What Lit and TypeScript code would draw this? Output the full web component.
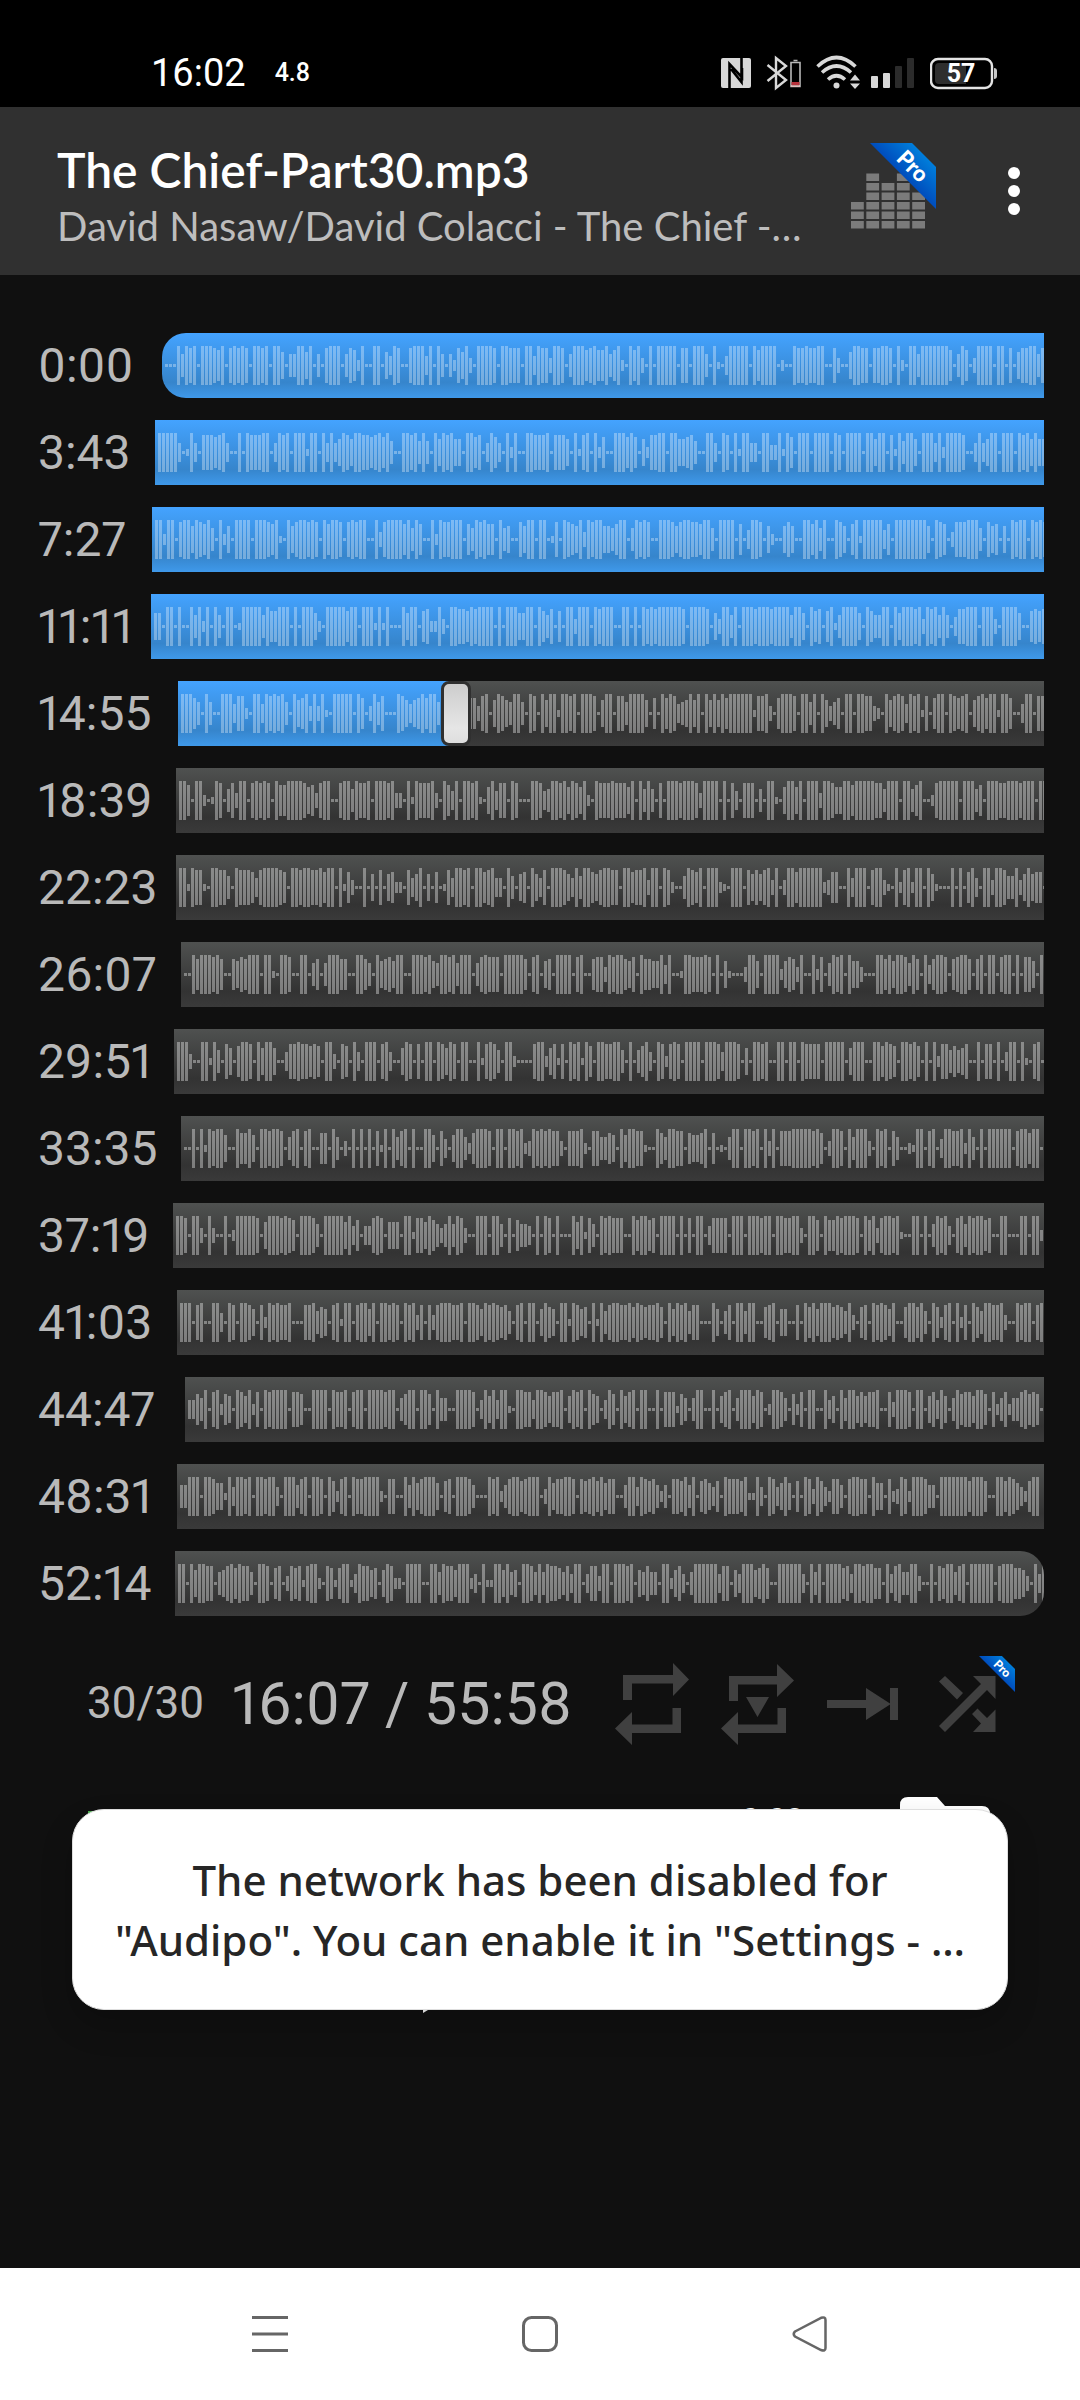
import { LitElement, html, css, svg } from "lit";
import { customElement, property } from "lit/decorators.js";

interface Segment {
  time: string;
  label: number;
  levels: string;
}

/* One digit per sample: 0 is silence, 9 is full level. */
const SEGMENTS: Segment[] = [
  { time: "0:00", label: 124, levels: "0009598909998790898980998909960559969050899905872900990649800899949095052869309999809988809949" + "8839980599978977957920979309099999088099950910499999097999902009889889900830069988088998092099599999997059703999909908068899589989949" },
  { time: "3:43", label: 117, levels: "999994019408887894009098889904989099919909494698699887897950099895950969896609978049740929009988" + "890888609189092700999797062889909966785009940980919944099339197099909999098099990996990819599609994929999800494699099909896966" },
  { time: "7:27", label: 114, levels: "9929908996987950926099990999879109689989809799808989900938999979597009298899907598977095600869909" + "901809876939899665799059898009998689988799509999070499806200686009979590098607919999947099999999609870388899950867060989909898" },
  { time: "11:11", label: 113, levels: "6609909009592909509901999995977999090999620999997990999191900096990782293099887989999090999669909" + "758070993999098999009909098989999998099998063995909998999899995996097807915999960975599096999893989595048899909993099996007878" },
  { time: "14:55", label: 140, levels: "999750950099948820994989895096793939109999909703958000986467979959999999773890698659950980" + "9699199890999806990885999960709798456969096969799999918893079998099590963570990998832096898498918079909878906897991997004990889" },
  { time: "18:39", label: 138, levels: "9970992019805839908989809779999867389900899598890999893309198889309749099891069488098000998" + "4599896986920988898886909595080999899983999909084088805099106996909993998669979999988599909957900289999909995709998899989990999" },
  { time: "22:23", label: 138, levels: "9919881099885098887489999870998998897990917300906080672208469060701849989099789440950670964" + "80999864959976899880997889399098200598790999210999086868939039979999992377009499908993109289299096100090907940993998559369677099" },
  { time: "26:07", label: 143, levels: "00979998970076879990991099800990570599977009975096786990099989659989599905898880999997089" + "0670999908900788398997680977669490019988898090610003996099992687390092805989096630009979699859709479980789970790990899090886090" },
  { time: "29:51", label: 136, levels: "999300991950860799809699600488988787099308709409990894006980809909869809900918985099200008" + "9926818098919709988995090579409828980999909998499980609989009909909888809999906999009979870998970909288575680090880904990910890" },
  { time: "33:35", label: 143, levels: "00909198996009779609989980589089007709503090909081909589090099608406995279998099099892" + "3989898830888920885576096998810097599880766790701059909989093908889999989703998095999309890850021990890499889295090999999089979909" },
  { time: "37:19", label: 135, levels: "9980993093009029999980699989870999850999996947044898066609918869753595983009990995080755409" + "098090009691850989888009799780999909080990488880999099989909988993099709779899980979389989100990905989408959899780099000990992" },
  { time: "41:03", label: 139, levels: "999089009940980998608298988900088957608919908996909989809893808389998890998698987850890990" + "697609919867091958998897987889709698958800096058099599007890660080979699978759307809898690079979509728909280975998893009899089" },
  { time: "44:47", label: 147, levels: "4475908927609869280989999088700999909889089909999899057990997095500999980496949910998849" + "986889069890976049709689099009088817505990090689059996980299850728099009460959968688900839998099068496059788699708258255897870095" },
  { time: "48:31", label: 139, levels: "55999099866194998909989940999589099809728909889999208800959689996078099985000989258997899" + "903968899808789796880059949878525088795907864709888791194098469607098397428850899880966082398299985509999999799970099798642799" },
  { time: "52:14", label: 137, levels: "99096998805689798850998078038781899208717991498867069822099990099598869992409119969560998595" + "98875849904883990999890658550992684059999994880649996797009999994095909999784998997709489559930090879958909999990899977630949999" },
];

const CURRENT = 4;
const ELAPSED = 72;
const SEGMENT_SECONDS = 224;

@customElement("wave-track")
class WaveTrack extends LitElement {
  @property() levels = "";
  static styles = css`
    :host {
      display: block;
      height: 65px;
      overflow: hidden;
      background: linear-gradient(#4f5150, #333 76%, #3a3a3a);
      --bar: rgba(255, 255, 255, 0.37);
    }
    :host([tone="played"]) {
      background: linear-gradient(#44a3ff, #3685cc 76%, #3f99ea);
      --bar: rgba(255, 255, 255, 0.32);
    }
    .wave {
      display: block;
      fill: var(--bar);
    }
  `;
  render() {
    const d = [...this.levels]
      .map((c, i) => {
        const h = c === "0" ? 3 : 3 + Number(c) * 4;
        return `M${3 + i * 4} ${32 - (h - 1) / 2}h3v${h}h-3z`;
      })
      .join("");
    return html`<svg class="wave" width="100%" height="65" aria-hidden="true">
      ${svg`<path d=${d} />`}
    </svg>`;
  }
}

@customElement("pro-ribbon")
class ProRibbon extends LitElement {
  static styles = css`
    :host {
      display: block;
    }
    svg {
      display: block;
      width: 100%;
      height: 100%;
    }
    .word {
      font: 900 22px Lato, "Open Sans", sans-serif;
      fill: #fff;
    }
  `;
  render() {
    return html`<svg viewBox="0 0 66 66" aria-hidden="true">
      <defs>
        <linearGradient id="blue" x1="24" y1="42" x2="55" y2="11" gradientUnits="userSpaceOnUse">
          <stop offset="0" stop-color="#0038b0" />
          <stop offset="1" stop-color="#0080dc" />
        </linearGradient>
      </defs>
      <path d="M0 0H42L66 24V66Z" fill="url(#blue)" />
      <text class="word" transform="translate(43 23) rotate(45)" text-anchor="middle" y="8">Pro</text>
    </svg>`;
  }
}

@customElement("app-root")
class AppRoot extends LitElement {
  static styles = css`
    :host {
      display: block;
      font-family: Lato, "Open Sans", sans-serif;
      color: #b9b9b9;
    }
    * {
      box-sizing: border-box;
    }
    .screen {
      display: flex;
      flex-direction: column;
      min-height: 100vh;
      background: #101010;
    }
    svg {
      display: block;
    }
    button {
      border: 0;
      padding: 0;
      background: none;
      color: inherit;
      font: inherit;
    }
    .status {
      display: flex;
      align-items: center;
      height: 107px;
      padding: 38px 83px 0 151px;
      background: #000;
      color: #fff;
      font-family: Roboto, sans-serif;
    }
    .clock {
      font-size: 38px;
      line-height: 40px;
    }
    .rate {
      flex: 1;
      padding-left: 29px;
      font-size: 25px;
      font-weight: 500;
      line-height: 40px;
    }
    .icons {
      display: flex;
      gap: 15px;
    }
    .charge {
      font: 700 25px Roboto, sans-serif;
      fill: #fff;
    }
    .header {
      display: flex;
      align-items: center;
      height: 168px;
      padding: 0 51px 0 57px;
      background: #303030;
    }
    .titles {
      flex: 1;
      min-width: 0;
      padding-top: 10px;
    }
    .title {
      margin: 0;
      color: #fff;
      font-size: 48px;
      font-weight: 600;
      line-height: 60px;
      white-space: nowrap;
    }
    .artist {
      margin: 0;
      color: #bdbdbd;
      font-size: 40px;
      line-height: 52px;
      white-space: nowrap;
    }
    .equalizer {
      position: relative;
      margin-right: 63px;
    }
    .equalizer pro-ribbon {
      position: absolute;
      top: 36px;
      right: 0;
      width: 66px;
      height: 66px;
    }
    .main {
      position: relative;
      flex: 1;
      padding-top: 58px;
    }
    .rows {
      display: grid;
      grid-template-columns: minmax(0, 1fr);
      gap: 22px;
      margin: 0;
      padding: 0 36px 0 38px;
      list-style: none;
    }
    .row {
      display: flex;
      align-items: center;
      height: 65px;
    }
    .time {
      flex: none;
      font: 400 48px/65px Roboto, sans-serif;
      font-variant-numeric: proportional-nums;
    }
    .track {
      position: relative;
      flex: 1;
      min-width: 0;
    }
    .row:first-child wave-track {
      border-radius: 24px 0 0 24px;
    }
    .row:last-child wave-track {
      border-radius: 0 24px 24px 0;
    }
    .played {
      position: absolute;
      inset: 0 auto 0 0;
      overflow: hidden;
    }
    .seek {
      position: absolute;
      inset: 0 -15px;
      width: calc(100% + 30px);
      height: 65px;
      margin: 0;
      appearance: none;
      background: none;
    }
    .seek::-webkit-slider-thumb {
      appearance: none;
      width: 30px;
      height: 65px;
      border: 3px solid #303030;
      border-radius: 8px;
      background: linear-gradient(#cdcdcd, #e6e6e6 75%, #dedede);
    }
    .controls {
      display: flex;
      align-items: center;
      gap: 32px;
      height: 94px;
      margin-top: 40px;
      padding: 0 65px 0 87px;
      font-family: Roboto, sans-serif;
    }
    .progress {
      display: flex;
      flex: 1;
      align-items: center;
      gap: 28px;
      min-width: 0;
      white-space: nowrap;
    }
    .index {
      font-size: 44px;
    }
    .position {
      font-size: 59px;
      font-variant-numeric: proportional-nums;
    }
    .controls svg {
      fill: #404040;
    }
    .shuffle {
      position: relative;
    }
    .shuffle pro-ribbon {
      position: absolute;
      top: 0;
      right: 0;
      width: 36px;
      height: 36px;
    }
    .deck {
      display: grid;
      grid-template-columns: 1fr auto auto;
      margin-top: 47px;
      padding: 0 90px 0 88px;
      color: #fff;
    }
    .accent {
      width: 240px;
      height: 40px;
      margin-top: 14px;
      background: #4caf50;
    }
    .pitch {
      padding-right: 96px;
      font: 400 32px/44px Roboto, sans-serif;
    }
    .play {
      grid-column: 1 / -1;
      justify-self: start;
      margin: 51px 0 0 335px;
    }
    .toast {
      position: absolute;
      right: 72px;
      bottom: 258px;
      left: 72px;
      padding: 40px 0 39px;
      border: 1px solid #dedede;
      border-radius: 32px;
      background: #fff;
      color: #262626;
      font-family: "Noto Sans", "Open Sans", sans-serif;
      font-size: 42px;
      font-weight: 500;
      line-height: 60px;
      text-align: center;
      box-shadow: 0 16px 32px rgba(0, 0, 0, 0.2);
    }
    .toast span {
      display: block;
      white-space: nowrap;
    }
    .nav {
      display: flex;
      align-items: center;
      justify-content: space-between;
      height: 132px;
      padding: 0 252px;
      background: #fff;
    }
    .nav svg {
      fill: none;
      stroke: #666;
      stroke-width: 3;
    }
  `;

  private statusIcons() {
    return html`<div class="icons">
      <svg width="30" height="36" viewBox="721 54 30 36" role="img" aria-label="NFC">
        <rect x="721" y="57" width="30" height="30" rx="2" fill="#d8d8d8" />
        <path d="M729.500 87V63L742 76.500V67M741.500 57V81L731 68" fill="none" stroke="#000" stroke-width="2.600" />
      </svg>
      <svg width="35" height="36" viewBox="766 54 35 36" role="img" aria-label="Bluetooth">
        <path d="M767.500 64L786 79L776 87V57L786 65L767.500 80" fill="none" stroke="#d8d8d8" stroke-width="2.400" />
        <path d="M791 61.500h9v24h-9zM793.500 59.500h4" fill="none" stroke="#b8b8b8" stroke-width="1.600" />
        <path d="M791.500 81h8v3h-8z" fill="#b8323c" />
        <path d="M791 85h9" stroke="#f0c0c0" stroke-width="1.500" />
      </svg>
      <svg width="40" height="36" viewBox="816 54 40 36" overflow="visible" role="img" aria-label="Wi-Fi">
        <g fill="none" stroke="#d8d8d8" stroke-width="3.600">
          <path d="M817.500 65.500Q836.500 47.500 855.500 65.500" />
          <path d="M822 71.500Q836.500 58.500 851 71.500" />
          <path d="M828 78.500Q836.500 71 845 78.500" />
        </g>
        <circle cx="836.500" cy="84.500" r="3" fill="#d8d8d8" />
        <path d="M850 79.500l5-6 5 6zM850 82.500h10l-5 5.500z" fill="#d8d8d8" />
      </svg>
      <svg width="44" height="36" viewBox="871 54 44 36" role="img" aria-label="Signal">
        <g fill="#d8d8d8">
          <rect x="871" y="75" width="7" height="12" rx="1" />
          <rect x="883" y="72" width="7" height="15" rx="1" />
        </g>
        <g fill="#2b2b2b">
          <rect x="895" y="65" width="7" height="22" rx="1" />
          <rect x="907" y="57" width="7" height="30" rx="1" />
        </g>
      </svg>
      <svg width="67" height="36" viewBox="930 54 67 36" role="img" aria-label="Battery 57 percent">
        <rect x="931" y="58" width="61" height="29" rx="7" fill="none" stroke="#e4e4e4" stroke-width="2.400" />
        <path d="M939 62h27v21h-27q-4 0-4-4v-13q0-4 4-4z" fill="#2e2e2e" />
        <path d="M994 67q3 0 3 3v5q0 3-3 3z" fill="#c8c8c8" />
        <text class="charge" x="961" y="81" text-anchor="middle">57</text>
      </svg>
    </div>`;
  }

  private equalizer() {
    const tops = [3, 6, 5, 6, 4];
    return tops.flatMap((n, c) =>
      Array.from({ length: n }, (_, r) => svg`<rect x=${c * 15.3} y=${114 - r * 9.5} width="12.800" height="7.500" />`)
    );
  }

  private row(s: Segment, i: number) {
    const current = i === CURRENT;
    return html`<li class="row">
      <span class="time" style="width:${s.label}px">${s.time}</span>
      <div class="track">
        <wave-track tone=${i < CURRENT ? "played" : "ahead"} .levels=${s.levels}></wave-track>
        ${current
          ? html`<div class="played" style="width:${(ELAPSED / SEGMENT_SECONDS) * 100}%">
                <wave-track tone="played" .levels=${s.levels}></wave-track>
              </div>
              <input class="seek" type="range" aria-label="Seek" min="0" max=${SEGMENT_SECONDS} .value=${String(ELAPSED)} />`
          : ""}
      </div>
    </li>`;
  }

  render() {
    return html`<div class="screen">
      <div class="status">
        <span class="clock">16:02</span>
        <span class="rate">4.8</span>
        ${this.statusIcons()}
      </div>
      <header class="header">
        <div class="titles">
          <h1 class="title">The Chief-Part30.mp3</h1>
          <p class="artist">David Nasaw/David Colacci - The Chief -…</p>
        </div>
        <button class="equalizer" aria-label="Equalizer">
          <svg width="85" height="168" fill="#7b7b7b">${this.equalizer()}</svg>
          <pro-ribbon></pro-ribbon>
        </button>
        <button aria-label="More options">
          <svg width="30" height="168" fill="#fff">
            <circle cx="15" cy="66" r="6" />
            <circle cx="15" cy="84" r="6" />
            <circle cx="15" cy="102" r="6" />
          </svg>
        </button>
      </header>
      <main class="main">
        <ol class="rows">
          ${SEGMENTS.map((s, i) => this.row(s, i))}
        </ol>
        <div class="controls">
          <div class="progress">
            <span class="index">30/30</span>
            <span class="position">16:07 / 55:58</span>
          </div>
          <button aria-label="Repeat all">
            <svg width="74" height="94">
              <path d="M8 44V19H58V7L74 23.500L58 40V27.500H17V44ZM66 52V77H17V89L0 72.500L17 56V68.500H57.500V52Z" />
            </svg>
          </button>
          <button aria-label="Repeat one">
            <svg width="74" height="94">
              <path d="M8 45V20H56V8L73 24.500L56 41V28.500H17V45ZM65 52V77H17V89L0 72.500L17 56V68.500H56.500V52ZM25 41H48L36.500 61Z" />
            </svg>
          </button>
          <button aria-label="Play to end">
            <svg width="80" height="94">
              <path d="M0 44H39V32L63 47.500V32H71V64H63V48.500L39 64V52H0Z" />
            </svg>
          </button>
          <button class="shuffle" aria-label="Shuffle">
            <svg width="76" height="94">
              <path d="M0 25.500L6 20L24 37L18 43.500ZM34 20H56.500V43L48 34L6 76L0 70L42 28ZM33 58L38.500 52.500L48 62L56.500 53.500V76H34L42 67.500Z" />
            </svg>
            <pro-ribbon></pro-ribbon>
          </button>
        </div>
        <section class="deck">
          <div class="accent"></div>
          <span class="pitch">0.03</span>
          <button aria-label="Open folder">
            <svg width="90" height="72" fill="#fff">
              <path d="M8 0H37L45 9H82Q90 9 90 17V72H0V8Q0 0 8 0Z" />
            </svg>
          </button>
          <button class="play" aria-label="Play">
            <svg width="80" height="93" fill="#fff"><path d="M0 0L78 46L0 93Z" /></svg>
          </button>
        </section>
        <div class="toast" role="status">
          <span>The network has been disabled for</span>
          <span>"Audipo". You can enable it in "Settings - …</span>
        </div>
      </main>
      <nav class="nav">
        <button aria-label="Recent apps">
          <svg width="36" height="36"><path d="M0 1.500H36M0 18H36M0 34.500H36" /></svg>
        </button>
        <button aria-label="Home">
          <svg width="36" height="36"><rect x="1.500" y="1.500" width="33" height="33" rx="8" /></svg>
        </button>
        <button aria-label="Back">
          <svg width="36" height="36">
            <path d="M3 15.500L29 1.800Q33.500 0.500 33.500 4V32Q33.500 35.500 29 34L3 20.500Q0.500 18 3 15.500Z" stroke-width="2.500" />
          </svg>
        </button>
      </nav>
    </div>`;
  }
}
